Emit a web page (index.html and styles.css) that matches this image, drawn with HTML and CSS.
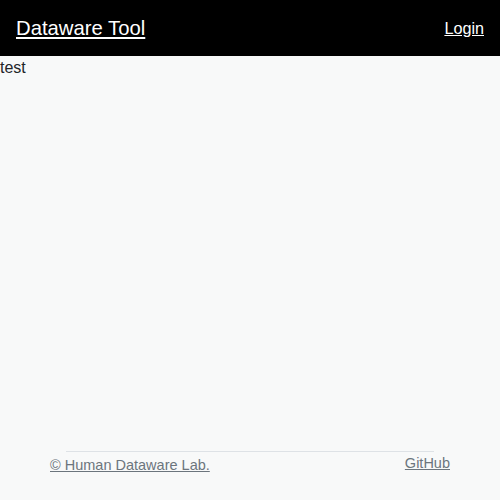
FILE: index.html
```html
<!DOCTYPE html>
<html>
<head>
<meta charset="utf-8">
<link rel="stylesheet" href="styles.css">
</head>
<body>
<div class="page">
  <header class="navbar">
    <a class="brand" href="#">Dataware Tool</a>
    <a class="login" href="#">Login</a>
  </header>
  <main class="main">test</main>
  <footer class="footer">
    <div class="footer-line"></div>
    <div class="footer-row">
      <a class="copy" href="#">© Human Dataware Lab.</a>
      <a class="github" href="#">GitHub</a>
    </div>
  </footer>
</div>
</body>
</html>
```
FILE: styles.css
```css
html, body {
  margin: 0;
  padding: 0;
}
body {
  background: #f8f9f9;
  font-family: "Liberation Sans", Arial, sans-serif;
  font-size: 16px;
  color: #212529;
}
.page {
  display: flex;
  flex-direction: column;
  min-height: 100vh;
}
.navbar {
  height: 56px;
  background: #000;
  display: flex;
  align-items: center;
  justify-content: space-between;
  padding: 1px 16px 0;
  box-sizing: border-box;
}
.brand {
  color: #fff;
  font-size: 20.3px;
  text-decoration: underline;
}
.login {
  color: #fff;
  font-size: 16.2px;
  text-decoration: underline;
}
.main {
  flex: 1;
  line-height: 24px;
}
.footer {
  width: 400px;
  margin: 0 auto;
  height: 49px;
  box-sizing: border-box;
}
.footer-line {
  margin: 0 16px;
  border-top: 1px solid #dee2e6;
}
.footer-row {
  display: flex;
  justify-content: space-between;
  align-items: flex-start;
  font-size: 14.5px;
}
.copy {
  color: #6c757d;
  margin-top: 5px;
}
.github {
  color: #6c757d;
  margin-top: 3px;
}
```
